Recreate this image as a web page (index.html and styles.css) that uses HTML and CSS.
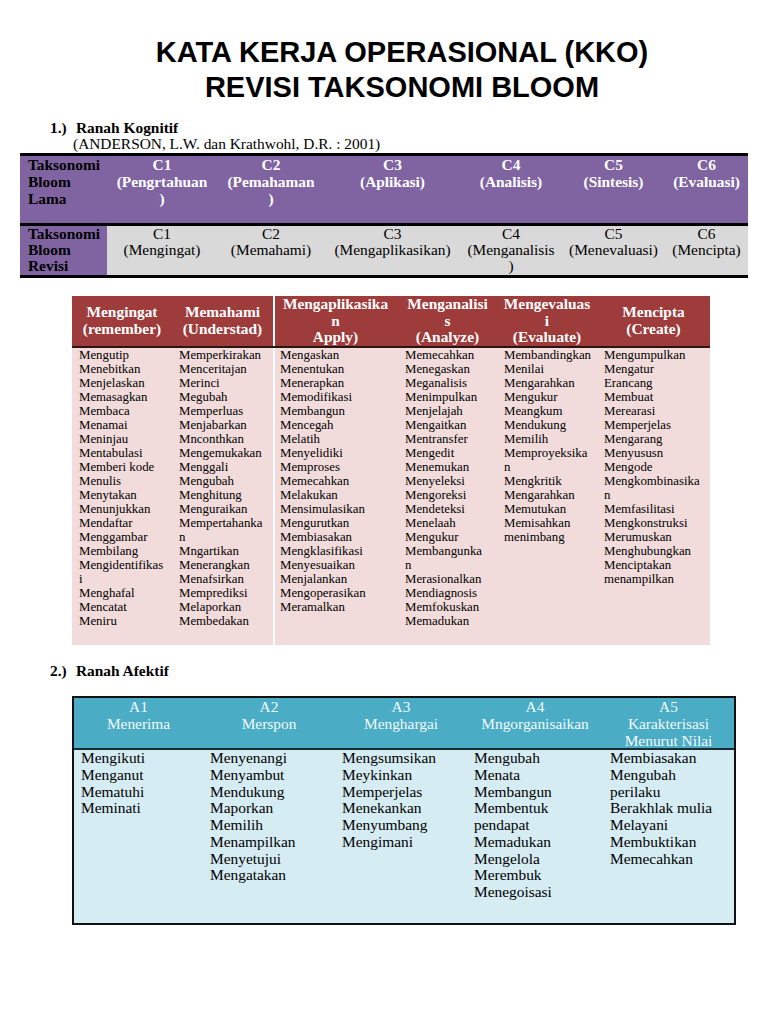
FILE: index.html
```html
<!DOCTYPE html>
<html lang="id">
<head>
<meta charset="utf-8">
<title>Kata Kerja Operasional (KKO) Revisi Taksonomi Bloom</title>
<link rel="stylesheet" href="styles.css">
</head>
<body>
<div class="page">
  <h1 class="title">KATA KERJA OPERASIONAL (KKO)<br>REVISI TAKSONOMI BLOOM</h1>

  <div class="sec-head sec1"><span class="num">1.)</span><span>Ranah Kognitif</span></div>
  <div class="source">(ANDERSON, L.W. dan Krathwohl, D.R. : 2001)</div>

  <div class="t1">
    <div class="c r1 lbl">Taksonomi<br>Bloom<br>Lama</div>
    <div class="c r1">C1<br>(Pengrtahuan<br>)</div>
    <div class="c r1">C2<br>(Pemahaman<br>)</div>
    <div class="c r1">C3<br>(Aplikasi)</div>
    <div class="c r1">C4<br>(Analisis)</div>
    <div class="c r1">C5<br>(Sintesis)</div>
    <div class="c r1">C6<br>(Evaluasi)</div>

    <div class="c r2 lbl">Taksonomi<br>Bloom<br>Revisi</div>
    <div class="c r2">C1<br>(Mengingat)</div>
    <div class="c r2">C2<br>(Memahami)</div>
    <div class="c r2">C3<br>(Mengaplikasikan)</div>
    <div class="c r2">C4<br>(Menganalisis<br>)</div>
    <div class="c r2">C5<br>(Menevaluasi)</div>
    <div class="c r2">C6<br>(Mencipta)</div>
  </div>

  <div class="t2">
    <div class="h">Mengingat<br>(remember)</div>
    <div class="h">Memahami<br>(Understad)</div>
    <div class="h sep">Mengaplikasika<br>n<br>Apply)</div>
    <div class="h">Menganalisi<br>s<br>(Analyze)</div>
    <div class="h">Mengevaluas<br>i<br>(Evaluate)</div>
    <div class="h">Mencipta<br>(Create)</div>

    <div class="b">Mengutip<br>Menebitkan<br>Menjelaskan<br>Memasagkan<br>Membaca<br>Menamai<br>Meninjau<br>Mentabulasi<br>Memberi kode<br>Menulis<br>Menytakan<br>Menunjukkan<br>Mendaftar<br>Menggambar<br>Membilang<br>Mengidentifikas<br>i<br>Menghafal<br>Mencatat<br>Meniru</div>
    <div class="b">Memperkirakan<br>Menceritajan<br>Merinci<br>Megubah<br>Memperluas<br>Menjabarkan<br>Mnconthkan<br>Mengemukakan<br>Menggali<br>Mengubah<br>Menghitung<br>Menguraikan<br>Mempertahanka<br>n<br>Mngartikan<br>Menerangkan<br>Menafsirkan<br>Memprediksi<br>Melaporkan<br>Membedakan</div>
    <div class="b sep">Mengaskan<br>Menentukan<br>Menerapkan<br>Memodifikasi<br>Membangun<br>Mencegah<br>Melatih<br>Menyelidiki<br>Memproses<br>Memecahkan<br>Melakukan<br>Mensimulasikan<br>Mengurutkan<br>Membiasakan<br>Mengklasifikasi<br>Menyesuaikan<br>Menjalankan<br>Mengoperasikan<br>Meramalkan</div>
    <div class="b">Memecahkan<br>Menegaskan<br>Meganalisis<br>Menimpulkan<br>Menjelajah<br>Mengaitkan<br>Mentransfer<br>Mengedit<br>Menemukan<br>Menyeleksi<br>Mengoreksi<br>Mendeteksi<br>Menelaah<br>Mengukur<br>Membangunka<br>n<br>Merasionalkan<br>Mendiagnosis<br>Memfokuskan<br>Memadukan</div>
    <div class="b">Membandingkan<br>Menilai<br>Mengarahkan<br>Mengukur<br>Meangkum<br>Mendukung<br>Memilih<br>Memproyeksika<br>n<br>Mengkritik<br>Mengarahkan<br>Memutukan<br>Memisahkan<br>menimbang</div>
    <div class="b">Mengumpulkan<br>Mengatur<br>Erancang<br>Membuat<br>Merearasi<br>Memperjelas<br>Mengarang<br>Menyususn<br>Mengode<br>Mengkombinasika<br>n<br>Memfasilitasi<br>Mengkonstruksi<br>Merumuskan<br>Menghubungkan<br>Menciptakan<br>menampilkan</div>
  </div>

  <div class="sec-head sec2"><span class="num">2.)</span><span>Ranah Afektif</span></div>

  <div class="t3">
    <div class="h">A1<br>Menerima</div>
    <div class="h">A2<br>Merspon</div>
    <div class="h">A3<br>Menghargai</div>
    <div class="h">A4<br>Mngorganisaikan</div>
    <div class="h">A5<br>Karakterisasi<br>Menurut Nilai</div>

    <div class="b">Mengikuti<br>Menganut<br>Mematuhi<br>Meminati</div>
    <div class="b">Menyenangi<br>Menyambut<br>Mendukung<br>Maporkan<br>Memilih<br>Menampilkan<br>Menyetujui<br>Mengatakan</div>
    <div class="b">Mengsumsikan<br>Meykinkan<br>Memperjelas<br>Menekankan<br>Menyumbang<br>Mengimani</div>
    <div class="b">Mengubah<br>Menata<br>Membangun<br>Membentuk<br>pendapat<br>Memadukan<br>Mengelola<br>Merembuk<br>Menegoisasi</div>
    <div class="b">Membiasakan<br>Mengubah<br>perilaku<br>Berakhlak mulia<br>Melayani<br>Membuktikan<br>Memecahkan</div>
  </div>
</div>
</body>
</html>
```

FILE: styles.css
```css
html, body {
  margin: 0;
  padding: 0;
  background: #ffffff;
}

.page {
  width: 768px;
  padding-top: 35px;
  font-family: "Liberation Serif", "Times New Roman", serif;
  color: #000;
}

.title {
  margin: 0;
  padding-left: 36px;
  font-family: "Liberation Sans", Arial, sans-serif;
  font-weight: bold;
  font-size: 29px;
  line-height: 35px;
  text-align: center;
  color: #000;
}

.sec-head {
  display: flex;
  padding-left: 50px;
  font-weight: bold;
  font-size: 15.4px;
  line-height: 16px;
}

.sec-head .num {
  width: 26px;
}

.sec1 {
  margin-top: 15px;
}

.sec2 {
  margin-top: 18px;
}

.source {
  padding-left: 73px;
  font-size: 15.4px;
  line-height: 16px;
}

/* Table 1 */
.t1 {
  margin-top: 1px;
  margin-left: 20px;
  width: 728px;
  display: grid;
  grid-template-columns: 87px 110px 108px 135px 102px 103px 83px;
  border-top: 3px solid #000;
  border-bottom: 3px solid #000;
  font-size: 15.4px;
}

.t1 .c {
  text-align: center;
  white-space: nowrap;
}

.t1 .r1 {
  height: 67px;
  line-height: 17px;
  background: #8064a2;
  color: #ffffff;
  font-weight: bold;
  border-bottom: 3px solid #000;
}

.t1 .r2 {
  height: 49px;
  line-height: 16px;
  background: #d9d9d9;
  color: #000;
}

.t1 .lbl {
  background: #8064a2;
  color: #000;
  font-weight: bold;
  text-align: left;
  padding-left: 8px;
}

/* Table 2 */
.t2 {
  margin-top: 18px;
  margin-left: 72px;
  width: 638px;
  display: grid;
  grid-template-columns: 100px 101px 125px 99px 100px 113px;
}

.t2 .h {
  height: 50px;
  display: flex;
  align-items: center;
  justify-content: center;
  text-align: center;
  background: #9e3b3b;
  color: #ffffff;
  font-weight: bold;
  font-size: 15.4px;
  line-height: 16.7px;
  white-space: nowrap;
  border-bottom: 2px solid #2a1414;
}

.t2 .b {
  height: 297px;
  padding-left: 7px;
  background: #f2dbdb;
  font-size: 12.85px;
  line-height: 14px;
  white-space: nowrap;
}

.t2 .sep {
  box-shadow: inset 2px 0 0 #ffffff;
}

/* Table 3 */
.t3 {
  margin-top: 17px;
  margin-left: 72px;
  width: 660px;
  display: grid;
  grid-template-columns: 129px 132px 132px 136px 131px;
  border: 2px solid #111;
  font-size: 15.4px;
}

.t3 .h {
  height: 50px;
  background: #4bacc6;
  color: #f2fafc;
  text-align: center;
  line-height: 17px;
  white-space: nowrap;
  border-bottom: 2px solid #1a2a30;
}

.t3 .b {
  height: 173px;
  padding-left: 7px;
  background: #d6ecf3;
  line-height: 16.75px;
  white-space: nowrap;
}

.t3 .b:first-of-type {
  padding-left: 6px;
}
```
